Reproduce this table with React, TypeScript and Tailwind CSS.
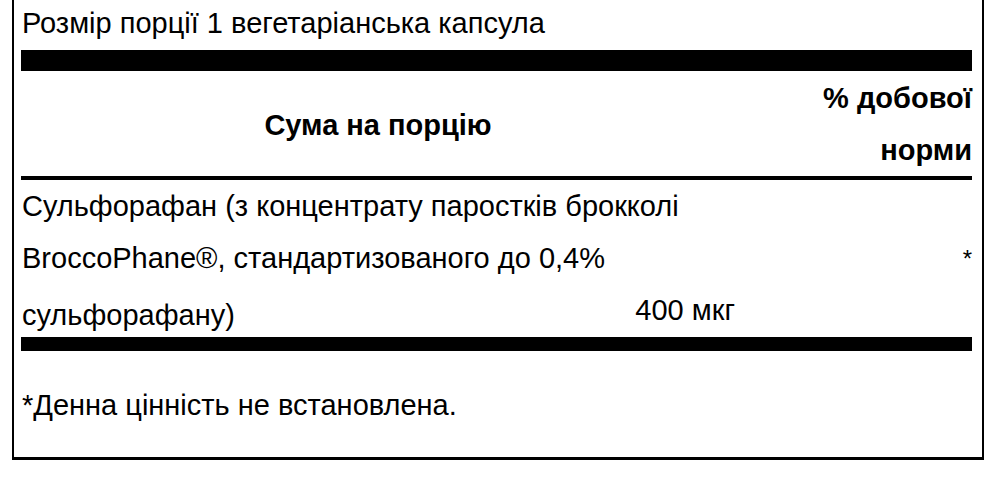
export default function App() {
  return (
    <div className="w-[1000px] h-[481px] bg-white">
      <div className="ml-[12px] w-[972px] border-x-2 border-b-[3px] border-black pl-[7px] pr-[10px] font-['Liberation_Sans',Arial,sans-serif] text-[29px] text-black">
        <div className="h-[50px] leading-[46px] pl-[1px]">Розмір порції 1 вегетаріанська капсула</div>
        <div className="h-[21px] bg-black" />
        <div className="flex h-[105px]">
          <div className="w-[714px] flex items-center justify-center font-bold leading-[52px] pt-[3px]">
            Сума на порцію
          </div>
          <div className="flex-1 text-right font-bold leading-[52px] pt-[1px]">
            <div>% добової</div>
            <div>норми</div>
          </div>
        </div>
        <div className="h-[4px] bg-black" />
        <div className="flex h-[157px] leading-[52px]">
          <div className="w-[714px] pl-[1px]">
            <div>Сульфорафан (з концентрату паростків брокколі</div>
            <div>BroccoPhane®, стандартизованого до 0,4%</div>
            <div className="flex items-end justify-between">
              <span>сульфорафану)</span>
              <span className="mb-[5px]">400 мкг</span>
            </div>
          </div>
          <div className="flex-1 flex items-center justify-end text-[24px]">*</div>
        </div>
        <div className="h-[14px] bg-black" />
        <div className="h-[106px] pt-[28px] leading-[52px] pl-[1px]">*Денна цінність не встановлена.</div>
      </div>
    </div>
  );
}
